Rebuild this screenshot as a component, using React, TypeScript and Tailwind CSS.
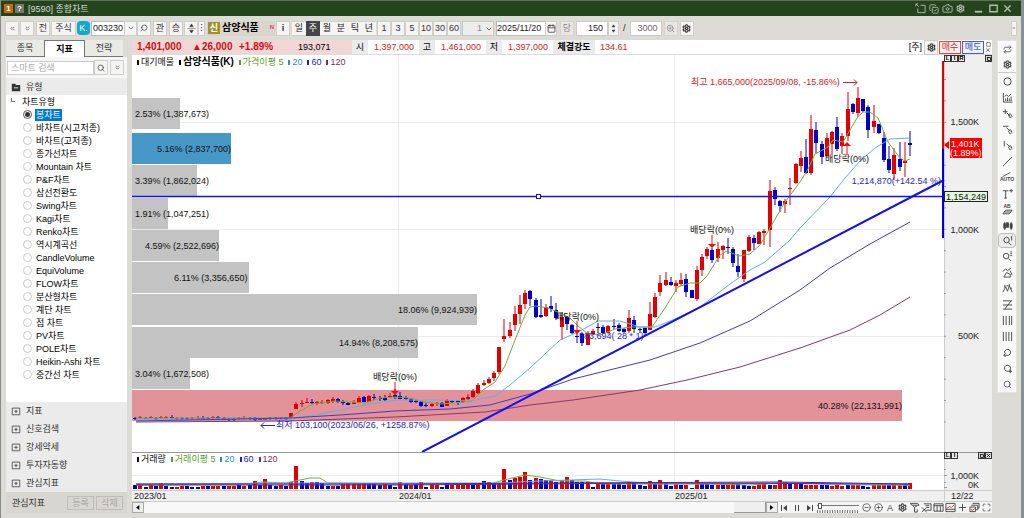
import type { ReactNode } from 'react';
import {
  LuCamera,
  LuCopyCheck,
  LuSettings,
  LuSearch,
  LuZoomIn,
  LuCirclePlus,
  LuCircleMinus,
  LuMaximize,
  LuRepeat,
  LuCalendar,
  LuChevronDown,
  LuChevronsDown,
  LuChevronsLeft,
  LuChevronsRight,
  LuPlus,
  LuX,
  LuSquare,
} from 'react-icons/lu';

// [direction, high, body top, body bottom, low], 1 = up week, 0 = down week
type Candle = [number, number, number, number, number];

const candles: Candle[] = [
  [0, 417, 418, 419, 420], [1, 416, 417, 418, 419], [0, 417, 418, 419, 419], [1, 416, 417, 418, 419],
  [0, 417, 418, 419, 420], [1, 416, 417, 418, 419], [1, 416, 417, 418, 419], [0, 415, 417, 418, 419],
  [1, 417, 418, 419, 420], [0, 417, 418, 419, 420], [0, 417, 418, 419, 420], [1, 417, 418, 419, 420],
  [1, 416, 418, 419, 420], [0, 416, 418, 419, 420], [0, 417, 418, 419, 420], [1, 416, 417, 418, 419],
  [0, 416, 417, 418, 419], [0, 417, 418, 420, 420], [0, 418, 419, 420, 421], [0, 418, 419, 420, 421],
  [1, 417, 418, 419, 420], [1, 416, 418, 419, 420], [0, 417, 418, 419, 420], [0, 417, 419, 420, 421],
  [0, 418, 419, 420, 420], [1, 418, 419, 420, 420], [0, 417, 418, 419, 420], [0, 417, 418, 419, 420],
  [1, 417, 418, 419, 420], [0, 417, 418, 419, 420], [1, 413, 413, 417, 418], [1, 402, 404, 409, 409],
  [1, 400, 403, 404, 407], [1, 398, 402, 403, 403], [0, 399, 402, 403, 404], [1, 401, 402, 403, 405],
  [1, 400, 402, 403, 404], [1, 399, 400, 403, 404], [1, 397, 399, 401, 403], [0, 398, 399, 402, 403],
  [0, 400, 402, 403, 405], [0, 402, 403, 405, 405], [1, 400, 402, 404, 404], [1, 396, 398, 402, 403],
  [0, 396, 397, 402, 402], [1, 395, 396, 402, 402], [0, 394, 397, 398, 400], [0, 396, 398, 399, 401],
  [0, 395, 398, 400, 401], [1, 393, 396, 397, 398], [0, 389, 395, 397, 399], [0, 392, 396, 399, 399],
  [0, 396, 398, 399, 400], [0, 398, 399, 402, 403], [0, 400, 401, 402, 403], [0, 401, 402, 406, 407],
  [0, 403, 405, 406, 407], [1, 403, 404, 406, 407], [1, 402, 403, 404, 406], [0, 402, 403, 407, 407],
  [1, 399, 400, 406, 406], [0, 400, 401, 402, 403], [0, 400, 401, 402, 405], [1, 397, 398, 402, 403],
  [1, 394, 397, 399, 400], [1, 389, 391, 397, 398], [1, 383, 385, 393, 394], [1, 380, 383, 385, 386],
  [1, 377, 379, 383, 384], [1, 371, 373, 378, 381], [1, 347, 347, 372, 374], [1, 319, 336, 339, 342],
  [1, 322, 330, 336, 338], [1, 306, 314, 325, 331], [1, 295, 305, 314, 324], [1, 290, 293, 304, 309],
  [0, 290, 291, 299, 306], [0, 298, 300, 317, 318], [0, 299, 315, 317, 318], [1, 304, 307, 316, 317],
  [0, 296, 306, 309, 312], [0, 303, 310, 318, 320], [1, 312, 317, 327, 340], [0, 316, 317, 324, 330],
  [0, 324, 325, 333, 334], [0, 333, 336, 337, 343], [0, 332, 334, 343, 346], [1, 331, 333, 345, 345],
  [1, 329, 331, 334, 335], [0, 323, 327, 328, 333], [0, 325, 327, 333, 334], [1, 325, 326, 333, 334],
  [0, 319, 326, 327, 329], [0, 323, 325, 331, 332], [0, 328, 329, 332, 333], [1, 310, 318, 331, 333],
  [0, 316, 320, 329, 333], [0, 328, 329, 330, 333], [0, 327, 328, 333, 336], [1, 302, 314, 330, 330],
  [1, 293, 297, 317, 318], [1, 275, 283, 292, 296], [1, 272, 280, 285, 286], [0, 277, 282, 285, 286],
  [1, 280, 283, 286, 292], [1, 273, 280, 284, 286], [0, 274, 279, 292, 297], [0, 290, 290, 298, 298],
  [1, 266, 270, 299, 301], [1, 254, 257, 270, 276], [1, 247, 249, 256, 259], [0, 248, 250, 260, 263],
  [1, 242, 249, 258, 262], [1, 245, 246, 250, 259], [0, 238, 247, 248, 254], [0, 247, 249, 263, 267],
  [0, 254, 266, 272, 277], [1, 250, 250, 279, 282], [1, 235, 237, 251, 252], [0, 235, 238, 243, 250],
  [1, 231, 232, 244, 244], [1, 229, 231, 233, 245], [1, 180, 191, 230, 247], [0, 187, 190, 199, 205],
  [0, 200, 201, 206, 212], [1, 199, 201, 204, 213], [1, 178, 188, 189, 205], [1, 163, 164, 183, 184],
  [1, 151, 158, 166, 172], [0, 139, 157, 173, 174], [1, 115, 129, 173, 175], [0, 122, 130, 143, 153],
  [0, 141, 144, 157, 164], [1, 133, 138, 156, 157], [1, 131, 132, 144, 154], [0, 117, 127, 149, 151],
  [1, 133, 136, 146, 154], [1, 92, 109, 136, 141], [0, 103, 104, 112, 114], [1, 87, 98, 113, 117],
  [0, 99, 99, 111, 112], [0, 105, 107, 130, 138], [1, 105, 121, 127, 133], [0, 124, 124, 133, 134],
  [0, 132, 138, 160, 162], [0, 146, 159, 170, 173], [1, 148, 155, 174, 180], [0, 142, 159, 167, 171],
  [1, 142, 161, 163, 177], [0, 131, 143, 145, 156],
];

// bar height, negative = down week
const volumes = [
  -4, 5, -2, 4, -3, 6, -3, -2, 2, 3, -3, -2, -2, 3, -3, 3, 3, -3, 3, 3, -4, 3, -4, 8, -4, 10, -4, -3, 4, -3, 7, 23,
  -8, -6, 7, -7, -6, -3, 3, -3, 5, 5, 5, 5, 6, -5, -5, -4, 5, -4, -2, 7, -5, 4, -5, 7, -2, 5, 4, -2, -6, 4, 4, 5,
  5, -4, 5, -8, 7, -5, 5, 20, -9, 11, 12, 17, -9, 11, -10, -9, 9, -7, 9, 12, -9, -7, -7, 7, -2, 6, -5, 5, -5, -5,
  -4, 7, -6, -4, -3, 8, -6, 9, -6, -3, 5, -4, 4, -1, 9, -6, -5, -4, 4, -4, 4, 6, -5, -4, -3, 3, 5, 6, -4, 4, 9, 7,
  -6, 5, -5, 4, 4, 4, -4, -4, 3, 4, 3, -4, 4, 4, -3, -2, 4, 5, 4, -4, 5, 4, -5, 6,
];

const CANDLE_STEP = 5.2;
const candleX = (i: number) => 135.2 + i * CANDLE_STEP;

const profile = [
  { y: 98, end: 180, textX: 135, text: '2.53% (1,387,673)' },
  { y: 133, end: 231, textX: 157, text: '5.16% (2,837,700)', fill: '#4698c7' },
  { y: 165, end: 197, textX: 135, text: '3.39% (1,862,024)' },
  { y: 198, end: 168, textX: 135, text: '1.91% (1,047,251)' },
  { y: 230, end: 219, textX: 145, text: '4.59% (2,522,696)' },
  { y: 262, end: 249, textX: 174, text: '6.11% (3,356,650)' },
  { y: 294, end: 477, textX: 398, text: '18.06% (9,924,939)' },
  { y: 327, end: 418, textX: 339, text: '14.94% (8,208,575)' },
  { y: 358, end: 190, textX: 135, text: '3.04% (1,672,508)' },
  { y: 390, end: 902, textX: 818, text: '40.28% (22,131,991)', fill: '#e4929a' },
];

const dividends = [
  { x: 395, textY: 380, from: 382, tip: 395 },
  { x: 577, textY: 320, from: 321, tip: 334 },
  { x: 712, textY: 233, from: 235, tip: 248 },
  { x: 847, textY: 162, from: 155, tip: 142 },
];

const averages = [
  {
    color: '#74ad3c',
    points:
      '136,418 290,418 300,411 313,404 335,401 365,403 380,398 395,397 410,398 425,402 440,404 455,403 472,401 483,390 495,382 505,366 515,340 525,315 530,307 536,306 548,308 560,313 570,318 578,326 588,334 600,335 615,329 632,327 652,327 665,308 678,287 690,283 700,283 707,276 720,255 727,251 739,256 750,254 760,245 770,228 785,202 800,182 808,169 815,154 828,147 833,140 843,142 857,118 863,112 870,112 878,118 888,142 900,158 905,161 910,159',
  },
  {
    color: '#62b0e4',
    points:
      '136,419 290,419 310,416 345,409 375,403 395,400 440,400 470,401 495,396 510,385 530,368 560,340 580,331 598,321 620,321 640,327 655,327 675,319 700,307 730,284 750,270 765,262 790,240 800,228 830,197 845,178 860,161 875,148 890,139 910,138',
  },
  { color: '#3d3dcb', points: '136,421 290,418 340,415 395,411 450,409 490,405 530,394 573,379 650,360 700,343 750,321 800,290 830,268 870,244 910,222' },
  { color: '#843a68', points: '136,422 290,421 395,417 485,412 530,405 573,400 640,390 687,380 740,367 800,348 850,330 880,315 910,297' },
];

const chartTypes = [
  '봉차트', '바차트(시고저종)', '바차트(고저종)', '종가선차트', 'Mountain 차트', 'P&F차트', '삼선전환도',
  'Swing차트', 'Kagi차트', 'Renko차트', '역시계곡선', 'CandleVolume', 'EquiVolume', 'FLOW차트',
  '분산형차트', '계단 차트', '점 차트', 'PV차트', 'POLE차트', 'Heikin-Ashi 차트', '중간선 차트',
];

const toolBtn =
  'flex h-[15px] shrink-0 items-center justify-center border border-[#cfcfca] bg-[#f4f4f2] text-[#333] whitespace-nowrap';

function ToolButton({ label, className = 'w-[14px]', children }: { label?: string; className?: string; children?: ReactNode }) {
  return (
    <button type="button" aria-label={label} className={`${toolBtn} ${className}`}>
      {children ?? label}
    </button>
  );
}

function Glyph({ d, fill = 'none', children }: { d?: string; fill?: string; children?: ReactNode }) {
  return (
    <svg viewBox="0 0 12 12" className="size-[11px]" fill={fill} stroke="currentColor" strokeWidth="1">
      {d && <path d={d} />}
      {children}
    </svg>
  );
}

function TitleBar() {
  return (
    <header className="flex h-4 items-center border-t border-[#5f6f5a] bg-[#24451c] pl-[3px] pr-2 text-[#d5d9d2]">
      <span className="flex size-[9px] items-center justify-center bg-[#c96a08] text-[8px] font-bold text-white">1</span>
      <span className="ml-[2px] flex size-[9px] items-center justify-center bg-[#77766f] text-[8px] font-bold text-white">?</span>
      <h1 className="ml-1">[9590] 종합차트</h1>
      <div className="ml-auto flex items-center text-[#b4bcae]">
        <button type="button" aria-label="분리" className="mr-[3px]">
          <Glyph d="M1 1l3 3M1 3.500V1h2.500M6 2.500h5v8H3V6" />
        </button>
        <button type="button" aria-label="복사" className="mr-[3px]"><LuCopyCheck size={10} /></button>
        <button type="button" aria-label="캡처" className="mr-[3px]"><LuCamera size={11} /></button>
        <button type="button" aria-label="설정" className="mr-2"><LuSettings size={9} strokeWidth={3} /></button>
        <button type="button" aria-label="최소화" className="mr-[4px]"><Glyph><path d="M2 9.500h8" strokeWidth="2" /></Glyph></button>
        <button type="button" aria-label="최대화" className="mr-[3px]"><Glyph><path d="M2 2.500h8v7H2z" strokeWidth="1.500" /></Glyph></button>
        <button type="button" aria-label="닫기"><LuX size={11} strokeWidth={3} /></button>
      </div>
    </header>
  );
}

function Toolbar() {
  return (
    <div className="flex h-6 items-center overflow-hidden pl-[4px]">
      <ToolButton label="이전"><LuChevronsLeft size={7} /></ToolButton>
      <ToolButton label="펼치기" className="ml-[1px] w-[14px]"><LuChevronsDown size={7} /></ToolButton>
      <ToolButton label="전" className="ml-[2px] w-[14px]" />
      <ToolButton label="주식" className="ml-[1px] w-[25px]" />
      <button type="button" className="ml-[1px] h-[14px] w-[13px] shrink-0 rounded-sm bg-[#12a9cc] text-white">K.</button>
      <input aria-label="종목코드" defaultValue="003230" className="ml-[1px] h-[15px] w-[33px] shrink-0 border border-r-0 border-[#bbb] bg-white pl-[1px]" />
      <ToolButton label="종목 목록" className="w-[13px]"><LuChevronDown size={8} /></ToolButton>
      <ToolButton label="종목 검색"><LuSearch size={8} className="-scale-x-100" /></ToolButton>
      <ToolButton label="관" className="ml-[2px] w-[14px]" />
      <ToolButton label="승" className="ml-[2px] w-[14px]" />
      <ToolButton label="순환" className="ml-[1px] w-[14px]">
        <Glyph><path d="M4 4l2-3 2 3zM4 8l2 3 2-3zM1.500 6h9" fill="currentColor" strokeWidth=".5" /></Glyph>
      </ToolButton>
      <ToolButton label="더보기" className="w-[7px]">⋮</ToolButton>
      <div className="ml-[2px] flex h-[15px] w-[68px] shrink-0 items-center bg-[#d9d5cb] px-[1px] font-bold text-black">
        <span className="flex size-[12px] items-center justify-center bg-[#a4902c] text-white">신</span>
        <span className="ml-[2px] text-[10px]">삼양식품</span>
        <span className="ml-auto self-start text-[6px] text-[#d2467a]">N</span>
      </div>
      <ToolButton label="종목 정보" className="ml-[1px] w-[14px] font-bold">i</ToolButton>
      <div className="ml-[2px] flex shrink-0">
        {['일', '주', '월', '분', '틱', '년'].map((p) => (
          <button
            key={p}
            type="button"
            aria-pressed={p === '주'}
            className={
              p === '주'
                ? 'h-[15px] w-[14px] bg-[#454545] text-white'
                : 'h-[15px] w-[14px] border-y border-[#cfcfca] bg-[#f4f4f2] text-[#222]'
            }
          >
            {p}
          </button>
        ))}
      </div>
      <div className="ml-[1px] flex shrink-0">
        {['1', '3', '5', '10', '30', '60'].map((m) => (
          <ToolButton key={m} label={m} />
        ))}
      </div>
      <div className="relative ml-[1px] shrink-0">
        <select aria-label="주기" className="h-[15px] w-[32px] appearance-none border border-[#c8c8c4] bg-[#ededeb] pl-[14px] text-[#888]">
          <option>1</option>
        </select>
        <LuChevronDown size={8} className="pointer-events-none absolute right-[1px] top-[4px]" />
      </div>
      <input aria-label="기준일" defaultValue="2025/11/20" className="ml-[2px] h-[15px] w-[49px] shrink-0 border border-r-0 border-[#bbb] bg-white" />
      <ToolButton label="달력" className="w-[12px]"><LuCalendar size={9} /></ToolButton>
      <ToolButton label="당" className="ml-[3px] w-[14px] opacity-50" />
      <input aria-label="표시 개수" defaultValue="150" className="ml-[2px] h-[15px] w-[32px] shrink-0 border border-[#ccc] bg-white pr-1 text-right" />
      <ToolButton label="개수 조절" className="w-[11px]">
        <Glyph><path d="M4 4l2-3 2 3zM4 8l2 3 2-3z" fill="currentColor" strokeWidth=".5" /></Glyph>
      </ToolButton>
      <span className="mx-1">/</span>
      <input aria-label="전체 개수" defaultValue="3000" className="h-[15px] w-[32px] shrink-0 border border-[#ccc] bg-white pr-[3px] text-right text-[#666]" />
      <ToolButton label="조회" className="ml-[2px] w-[14px] opacity-50"><LuZoomIn size={9} /></ToolButton>
      <ToolButton label="차트 설정" className="ml-[2px] w-[14px]"><LuSettings size={9} strokeWidth={3} /></ToolButton>
      <ToolButton label="도구 더보기" className="ml-auto mr-1 w-[6px]"><LuChevronsRight size={6} /></ToolButton>
    </div>
  );
}

function SidePanel() {
  return (
    <aside className="flex w-[121px] shrink-0 flex-col bg-[#ebebeb] text-[#333]">
      <div role="tablist" className="flex h-[17px] bg-[#dcdbd5]">
        <button role="tab" type="button" aria-selected="false" className="w-[38px] border-b border-[#777] bg-[#e9e9e6]">종목</button>
        <button role="tab" type="button" aria-selected="true" className="w-[41px] border border-b-0 border-[#777] bg-white font-bold text-black">지표</button>
        <button role="tab" type="button" aria-selected="false" className="w-[38px] border-b border-[#777] bg-[#e9e9e6]">전략</button>
      </div>
      <div className="flex h-[21px] items-center bg-[#f6f6f6] pl-[1px]">
        <input aria-label="스마트 검색" placeholder="스마트 검색" className="h-[14px] w-[87px] border border-[#ccc] bg-white pl-[3px] placeholder:text-[#aaa]" />
        <ToolButton label="검색"><LuSearch size={8} /></ToolButton>
        <ToolButton label="검색 옵션" className="ml-[2px] w-[14px]"><LuChevronsDown size={7} /></ToolButton>
      </div>
      <h2 className="flex h-[17px] items-center pl-[5px]">
        <svg viewBox="0 0 12 12" className="mr-[5px] size-[10px]"><path d="M1 2h4l1 1.500h5V11H1z" fill="#333" /><path d="M3.500 7h5" stroke="#fff" /></svg>
        유형
      </h2>
      <fieldset className="min-w-0 flex-1 bg-white pr-1 text-black">
        <legend className="float-left flex h-[13px] w-full items-center pl-[5px]">
          <span className="mr-[7px] mb-[3px] size-[4px] border-b border-l border-[#777]" />
          차트유형
        </legend>
        {chartTypes.map((t, i) => (
          <label key={t} className="flex h-[13px] w-full items-center pl-[17px]">
            <input
              type="radio"
              name="chartType"
              defaultChecked={i === 0}
              className="size-[9px] appearance-none rounded-full border border-[#ccc] bg-white bg-clip-content p-[1px] checked:border-[#555] checked:bg-[#333]"
            />
            <span className={i === 0 ? 'ml-[3px] bg-[#0078d7] px-[1px] leading-[12px] text-white' : 'ml-[4px] leading-[12px]'}>{t}</span>
          </label>
        ))}
      </fieldset>
      <ul>
        {['지표', '신호검색', '강세약세', '투자자동향', '관심지표'].map((g) => (
          <li key={g}>
            <button type="button" className="flex h-[18px] w-full items-center pl-[5px]">
              <svg viewBox="0 0 12 12" className="mr-[5px] size-[10px]" fill="none" stroke="#444">
                <path d="M1.500 2.500h9v8h-9zM6 4.500v4M4 6.500h4" />
              </svg>
              {g}
            </button>
          </li>
        ))}
      </ul>
      <div className="flex h-[21px] items-center bg-[#d7d6d0] pl-[6px] pr-1">
        관심지표
        <button type="button" className="ml-auto h-[14px] w-[27px] border border-[#bebdb7] text-[#aaa9a2]">등록</button>
        <button type="button" className="ml-[2px] h-[14px] w-[27px] border border-[#bebdb7] text-[#aaa9a2]">삭제</button>
      </div>
    </aside>
  );
}

function QuoteBar() {
  const label = 'flex h-full shrink-0 items-center justify-center bg-[#ebebeb] text-black';
  return (
    <div className="flex h-[15px] items-center border-b border-[#ddd] bg-white text-[#d22]">
      <div className="flex h-full w-[220px] shrink-0 items-center bg-[#f1d6d6] pl-[5px] text-[10px] font-bold text-[#d80f0f]">
        <span className="w-[55px]">1,401,000</span>
        <span className="w-[47px]">▲26,000</span>
        <span className="w-[59px]">+1.89%</span>
        <span className="text-[9px] font-normal text-black">193,071</span>
      </div>
      <span className={`${label} w-[16px]`}>시</span>
      <span className="w-[51px] pl-[6px]">1,397,000</span>
      <span className={`${label} w-[16px]`}>고</span>
      <span className="w-[51px] pl-[6px]">1,461,000</span>
      <span className={`${label} w-[16px]`}>저</span>
      <span className="w-[51px] pl-[6px]">1,397,000</span>
      <span className={`${label} w-[42px] font-bold`}>체결강도</span>
      <span className="pl-[5px]">134.61</span>
      <span className="ml-auto mr-[2px] text-black">[주]</span>
      <ToolButton label="호가 설정"><LuSettings size={9} strokeWidth={3} /></ToolButton>
      <button type="button" className="ml-[1px] h-[13px] w-[22px] border border-[#e04848] bg-[#fff2f2] leading-[11px]">매수</button>
      <button type="button" className="ml-[1px] h-[13px] w-[22px] border border-[#3f5fe0] bg-[#f2f4ff] leading-[11px] text-[#2445d8]">매도</button>
      <div className="flex w-[8px] flex-col items-center text-[#555]">
        <LuSquare size={5} strokeWidth={3} />
        <LuX size={6} strokeWidth={3} />
      </div>
    </div>
  );
}

function Legend({ items }: { items: { text: string; color: string; bold?: boolean }[] }) {
  return (
    <div className="absolute left-[5px] top-[1px] flex gap-[5px] leading-[12px]">
      {items.map((it) => (
        <span key={it.text} className={it.bold ? 'flex items-center text-[10px] font-bold' : 'flex items-center'} style={{ color: it.color }}>
          <i className="mr-[2px] h-[5px] w-[2px] bg-current" />
          {it.text}
        </span>
      ))}
    </div>
  );
}

function PaneButtons({ labels }: { labels: string[] }) {
  return (
    <div className="absolute right-0 top-0 flex h-[7px] w-[48px] text-[6px] leading-[5px] text-black">
      {labels.map((l) => (
        <button key={l} type="button" className="h-[7px] w-[7px] border border-[#333] bg-[#eee] font-bold">{l}</button>
      ))}
      <button type="button" aria-label="창 확대" className="ml-auto flex h-[7px] w-[7px] items-center justify-center border border-[#333] bg-[#ddd]">
        <LuSquare size={4} strokeWidth={5} />
      </button>
      {labels.length === 2 && (
        <button type="button" aria-label="창 닫기" className="flex h-[7px] w-[7px] items-center justify-center border border-[#333] bg-[#ddd]">
          <LuX size={5} strokeWidth={4} />
        </button>
      )}
    </div>
  );
}

function PricePane() {
  return (
    <div className="relative">
      <svg viewBox="132 55 860 397" className="block h-auto w-full bg-white" fontSize="9">
        <rect x="944" y="55" width="48" height="397" fill="#efefef" />
        <path d="M132 122.500h812M132 229.500h812M132 336.500h812M398.500 55v397M674.500 55v397" stroke="#ececec" />
        <path d="M944.500 55v397" stroke="#ccc" />
        {Array.from({ length: 17 }, (_, i) => (
          <path key={i} d={`M944 ${79.5 + i * 21.4}h2`} stroke="#999" />
        ))}

        {profile.map((p) => (
          <rect key={p.y} x="132" y={p.y} width={p.end - 132} height="31" fill={p.fill ?? '#c3c3c3'} />
        ))}

        {candles.map(([up, high, top, bottom, low], i) => {
          const x = Math.round(candleX(i));
          return (
            <g key={i} fill={up ? '#e00000' : '#0000cc'}>
              <rect x={x - 0.5} y={high} width="1" height={low - high} />
              <rect x={x - 2} y={top} width="4" height={bottom - top} />
            </g>
          );
        })}
        {averages.map((a) => (
          <polyline key={a.color} points={a.points} fill="none" stroke={a.color} />
        ))}

        {profile.map((p) => (
          <text key={p.y} x={p.textX} y={p.y + 19} fill="#111">{p.text}</text>
        ))}

        {dividends.map((d) => {
          const base = d.tip > d.from ? d.tip - 4 : d.tip + 4;
          return (
            <g key={d.x}>
              <text x={d.x} y={d.textY} textAnchor="middle" fill="#111">배당락(0%)</text>
              <path d={`M${d.x} ${d.from}V${base}`} stroke="#f01010" />
              <path d={`M${d.x - 4} ${base}h8L${d.x} ${d.tip}z`} fill="#f01010" />
            </g>
          );
        })}

        <text x="691" y="85" fill="#e02020">최고 1,665,000(2025/09/08, -15.86%)</text>
        <path d="M843 82.500h14M854 79.500l3 3-3 3" fill="none" stroke="#e02020" />
        <text x="276" y="428" fill="#2424d8">최저 103,100(2023/06/26, +1258.87%)</text>
        <path d="M275 425.500h-14M264 422.500l-3 3 3 3" fill="none" stroke="#2424d8" />
        <text x="579" y="339" fill="#2424d8">583,694( 28 * 1)</text>
        <text x="941" y="184" textAnchor="end" fill="#2424d8">1,214,870(+142.54 %)</text>

        <path d="M422 452L944 180" stroke="#1010fa" strokeWidth="2" />
        <path d="M132 196.500h812" stroke="#1010fa" strokeWidth="1.500" />
        <rect x="536.500" y="194.500" width="4" height="4" fill="#fff" stroke="#1010fa" />
        <path d="M943 61v88" stroke="#e00000" strokeWidth="2" />
        <path d="M943 149v89" stroke="#0000dc" strokeWidth="2" />

        <g textAnchor="end" fill="#222">
          <text x="979" y="125">1,500K</text>
          <text x="979" y="233">1,000K</text>
          <text x="979" y="339">500K</text>
        </g>
        <path d="M944 145l5-4v8z" fill="#f00" />
        <rect x="950" y="138" width="32" height="20" fill="#f00" />
        <text x="951" y="147" fill="#fff">1,401K</text>
        <text x="950" y="156" fill="#fff">(1.89%)</text>
        <rect x="944.500" y="191.500" width="43" height="10" fill="#e2fbdc" stroke="#222" />
        <text x="946" y="200" fill="#111">1,154,249</text>
      </svg>
      <Legend
        items={[
          { text: '대기매물', color: '#111111' },
          { text: '삼양식품(K)', color: '#000000', bold: true },
          { text: '가격이평 5', color: '#57a01c' },
          { text: '20', color: '#2a8ed6' },
          { text: '60', color: '#2020cc' },
          { text: '120', color: '#7d2a5e' },
        ]}
      />
      <PaneButtons labels={['L', 'I', 'R']} />
    </div>
  );
}

function VolumePane() {
  return (
    <div className="relative">
      <svg viewBox="132 452 860 50" className="block h-auto w-full bg-white" fontSize="9">
        <rect x="944" y="452" width="48" height="50" fill="#efefef" />
        <rect x="132" y="490" width="812" height="12" fill="#efefef" />
        <path d="M132 475.500h812M398.500 452v38M674.500 452v38" stroke="#ececec" />
        <path d="M132 452.500h860" stroke="#999" />
        <path d="M132 490.500h860M944.500 452v50M132 501.500h860" stroke="#ccc" />
        <path d="M944 469.500h2M944 475.500h3M944 482.500h2M944 487.500h3" stroke="#999" />
        {volumes.map((v, i) => (
          <rect
            key={i}
            x={Math.round(candleX(i)) - 2}
            y={489 - Math.abs(v)}
            width="4"
            height={Math.abs(v)}
            fill={v > 0 ? '#e00000' : '#0000cc'}
          />
        ))}
        <g fill="none">
          <path d="M136 485L250 484 262 482 285 483 300 480 310 478 320 478 328 483 400 484 490 484 504 480 525 475 540 477 560 481 585 481 600 484 650 484 700 484 750 485 780 483 910 485" stroke="#74ad3c" />
          <path d="M136 484L300 483 400 483 500 483 540 481 600 479 620 481 660 484 780 483 860 485 910 485" stroke="#62b0e4" />
          <path d="M136 484L400 484 560 483 780 482 910 484" stroke="#3d1fbb" />
          <path d="M136 485L400 485 660 483 910 484" stroke="#6a2a88" />
        </g>
        <g fill="#222">
          <text x="979" y="479" textAnchor="end">1,000K</text>
          <text x="979" y="488" textAnchor="end">0K</text>
          <text x="134" y="499">2023/01</text>
          <text x="399" y="499">2024/01</text>
          <text x="675" y="499">2025/01</text>
          <text x="951" y="499">12/22</text>
        </g>
      </svg>
      <Legend
        items={[
          { text: '거래량', color: '#111111' },
          { text: '거래이평 5', color: '#57a01c' },
          { text: '20', color: '#2a8ed6' },
          { text: '60', color: '#2020cc' },
          { text: '120', color: '#7d2a5e' },
        ]}
      />
      <PaneButtons labels={['L', 'I']} />
    </div>
  );
}

const footerTools: { label: string; icon: ReactNode }[] = [
  { label: '축소', icon: <LuCircleMinus size={9} /> },
  { label: '확대', icon: <LuCirclePlus size={9} /> },
  { label: '글자', icon: 'A' },
  { label: '설정', icon: <LuSettings size={9} strokeWidth={3} /> },
  { label: '도구', icon: <Glyph d="M1.500 1.500h8l1.500 2H3zM4 4l2 2 3-2M6 6v5h3V8" /> },
  { label: '지우기', icon: <Glyph d="M3 2h8v7H5M5 4h4M1 6l5 5M6 6l-5 5M6 6h3" /> },
  { label: '창 분할', icon: <Glyph d="M1 2h10v8H1zM1 4h10M4.500 4v6M8 4v6" /> },
  { label: '차트', icon: <Glyph d="M1 1.500h10v9H1zM1 8h10"><path d="M2 7l3-2 2 1 3-3" stroke="#d33" /></Glyph> },
  { label: '십자선', icon: <LuPlus size={11} /> },
  { label: '겹침', icon: <Glyph d="M4 1.500h7v5h-2M2.500 3.500h7v5h-2M1 5.500h6v5H1z"><path d="M2 8l2 1 2-2" stroke="#d33" /></Glyph> },
  { label: '전체', icon: <LuMaximize size={9} /> },
];

function FooterBar() {
  return (
    <div className="flex h-[11px] items-center bg-[#f4f4f4] text-[#444]">
      <button type="button" aria-label="왼쪽" className="flex h-full w-[12px] items-center justify-center border border-[#aaa] bg-[#eee]">
        <svg viewBox="0 0 4 6" className="h-[5px]"><path d="M4 0v6L0 3z" /></svg>
      </button>
      <div className="flex h-full flex-1 justify-end bg-[#f8f8f8]">
        <div className="w-[32px] border-b border-r border-[#999] bg-[#efefef]" />
      </div>
      <button type="button" aria-label="오른쪽" className="flex h-full w-[12px] items-center justify-center border border-[#aaa] bg-[#eee]">
        <svg viewBox="0 0 4 6" className="h-[5px]"><path d="M0 0v6l4-3z" /></svg>
      </button>
      <div className="ml-[2px] flex w-[34px] justify-between">
        <button type="button" aria-label="처음"><svg viewBox="0 0 8 8" className="size-[8px]"><path d="M1 1h1v6H1zM7 1v6L3 4z" fill="#444" /></svg></button>
        <button type="button" aria-label="멈춤"><svg viewBox="0 0 8 8" className="size-[8px]"><path d="M2 1h1v6H2zM5 1h1v6H5z" fill="#444" /></svg></button>
        <button type="button" aria-label="끝"><svg viewBox="0 0 8 8" className="size-[8px]"><path d="M6 1h1v6H6zM1 1v6l4-3z" fill="#444" /></svg></button>
      </div>
      <div className="relative ml-[2px] h-[10px] w-[44px]">
        <svg viewBox="0 0 44 10" className="absolute inset-0 size-full" fill="none" stroke="#777">
          <path d="M1 2.500h42" />
          <path d="M1 8.500h42" strokeWidth="3" strokeDasharray="1 1.500" />
        </svg>
        <input
          type="range"
          aria-label="재생 속도"
          defaultValue={4}
          className="absolute inset-0 h-[6px] w-full appearance-none bg-transparent [&::-webkit-slider-thumb]:h-[6px] [&::-webkit-slider-thumb]:w-[4px] [&::-webkit-slider-thumb]:appearance-none [&::-webkit-slider-thumb]:border [&::-webkit-slider-thumb]:border-[#555] [&::-webkit-slider-thumb]:bg-white"
        />
      </div>
      <div className="flex">
        {footerTools.map((t) => (
          <button key={t.label} type="button" aria-label={t.label} className="flex h-[11px] w-[12px] items-center justify-center">
            {t.icon}
          </button>
        ))}
      </div>
    </div>
  );
}

const drawTools: { label: string; icon: ReactNode }[] = [
  { label: '새로고침', icon: <LuRepeat size={9} /> },
  { label: '설정', icon: <LuSettings size={9} strokeWidth={3} /> },
  { label: '원', icon: <Glyph><circle cx="6" cy="6" r="4" /></Glyph> },
  { label: '차트 분석', icon: <Glyph d="M1.500 1v10h10M3 5l2-2 2 2 3-3M4 10V7M6 10V6M8 10V7M10 10V5" /> },
  { label: '추세선 추가', icon: <Glyph d="M1 4h5M3.500 1.500v5M5 5l4 4M7 8l2-2 2 3-2 2z" /> },
  { label: '수평선', icon: <Glyph d="M1 2.500h6M5 4l4 4M7 8l2-2 2 3-2 2z" /> },
  { label: '수직선', icon: <Glyph d="M2.500 1v6M5 4l4 4M7 8l2-2 2 3-2 2z" /> },
  { label: '직선', icon: <Glyph d="M1 11L11 1" /> },
  {
    label: '자동 추세선',
    icon: (
      <span className="flex flex-col items-center text-[5px] leading-[5px] font-bold">
        <svg viewBox="0 0 12 6" className="h-[5px] w-[10px]" fill="none" stroke="currentColor"><path d="M1 5.500L10 .5" /></svg>
        AUTO
      </span>
    ),
  },
  { label: '문자', icon: <Glyph d="M1 3h6M4 3v8M2.500 11h3M8 3h4M10 1v4" /> },
  {
    label: '지우개',
    icon: (
      <span className="flex flex-col items-center text-[5px] leading-[5px] font-bold">
        AB
        <svg viewBox="0 0 12 6" className="h-[6px] w-[11px]" fill="none" stroke="currentColor"><path d="M4 1h7L8 5H1zM2.500 3h7" /></svg>
      </span>
    ),
  },
  { label: '캔들', icon: <Glyph fill="currentColor" d="M2 4h2v5H2zM5 3h2v5H5zM9 4h2v5H9zM3 2v9M10 2v9" /> },
  { label: '구간 확대', icon: <Glyph d="M7 8l3 3M10.500 1v5"><circle cx="5" cy="5.500" r="3" /></Glyph> },
  { label: '목록 확대', icon: <Glyph d="M7 8l3 3M9 1h2M9 3h2M9 5h2"><circle cx="4.500" cy="5.500" r="3" /></Glyph> },
  { label: '패턴', icon: <Glyph d="M1 5l3-3 2 2 4-3M2 11l3-5 4 2v3zM9 4l2 5" /> },
  { label: '파동', icon: <Glyph d="M1 10l3-6 2 5 2-6 3 7M3 2v3M8 1v3M5 3h2M10 5v2" /> },
  { label: '채널', icon: <Glyph d="M1 2h10M1 6.500h10M1 11h10M10 2L3 11" /> },
  { label: '세로선', icon: <Glyph d="M1.500 1v10M4.500 1v10M8 1v10M10.500 1v10" /> },
  { label: '시간대', icon: <Glyph d="M1.500 1v10M4.500 1v10M7.500 1v10M10.500 1v10" /> },
  { label: '실행 취소', icon: <Glyph d="M3 7A3.300 3.300 0 1 1 7 9H2M4 7L2 9l2 2" /> },
  { label: '다시 실행', icon: <Glyph d="M6 9A3.300 3.300 0 1 1 9 7v2M6 9h5M9 7v4" /> },
  { label: '돋보기', icon: <LuSearch size={9} /> },
];

function DrawToolbar() {
  return (
    <nav className="flex w-5 shrink-0 flex-col self-start border border-[#e3e3e0] bg-[#fafafa] text-[#444]">
      {drawTools.map((t, i) => (
        <button
          key={t.label}
          type="button"
          aria-label={t.label}
          className={
            t.label === '구간 확대'
              ? 'flex h-[15px] items-center justify-center rounded-sm border border-[#bbb] bg-[#ececec]'
              : i === 1
                ? 'flex h-4 items-center justify-center border-b border-[#ccc]'
                : 'flex h-4 items-center justify-center'
          }
        >
          {t.icon}
        </button>
      ))}
    </nav>
  );
}

export default function App() {
  return (
    <div className="min-h-screen border-l border-r-[3px] border-l-[#8a8a8a] border-r-[#8b9094] bg-[#dcdbd5] pb-[5px] font-['Liberation_Sans','Noto_Sans_CJK_KR',sans-serif] text-[9px] leading-[12px] text-[#222]">
      <TitleBar />
      <Toolbar />
      <main className="flex gap-[5px] pl-[5px] pr-1">
        <SidePanel />
        <section className="min-w-0 flex-1">
          <QuoteBar />
          <PricePane />
          <VolumePane />
          <FooterBar />
        </section>
        <DrawToolbar />
      </main>
    </div>
  );
}
